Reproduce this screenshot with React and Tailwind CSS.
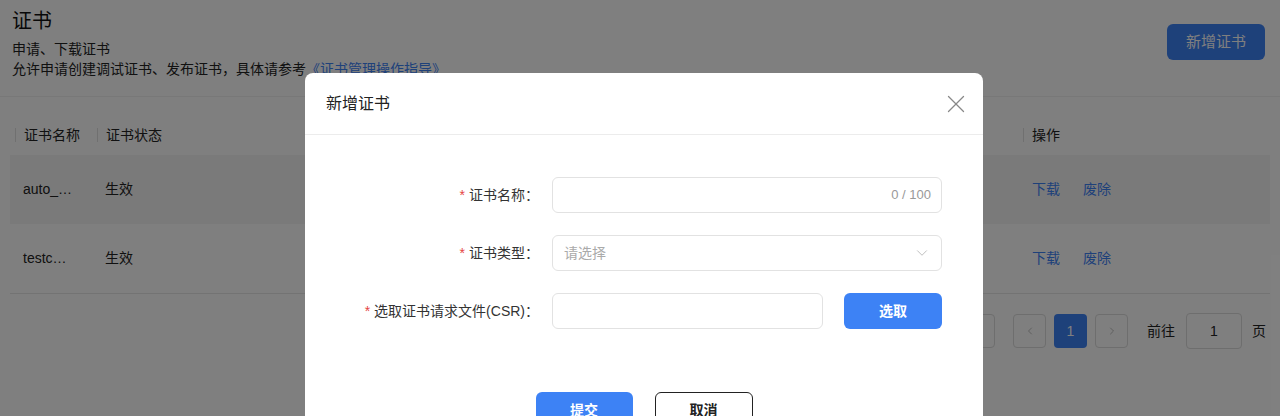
import { X, ChevronDown, ChevronLeft, ChevronRight } from "lucide-react";

const rows = [
  { name: "auto_…", status: "生效", hover: true },
  { name: "testc…", status: "生效", hover: false },
];

function Field({ label, children }) {
  return (
    <div className="flex items-center">
      <div className="w-[234px] text-right text-[14px] text-[#333]">
        <span className="text-[#e54545] mr-1">*</span>
        {label}
      </div>
      <div className="ml-[13px] flex items-center">{children}</div>
    </div>
  );
}

export default function App() {
  return (
    <div
      className="relative w-[1280px] h-[416px] overflow-hidden bg-white text-[#222]"
      style={{ fontFamily: '"Liberation Sans", "Noto Sans CJK SC", sans-serif' }}
    >
      {/* page header */}
      <div className="flex justify-between px-3 pt-2 h-[97px] border-b border-[#f0f0f0]">
        <div>
          <h1 className="text-[20px] leading-[26px] text-[#111]">证书</h1>
          <p className="mt-[5px] text-[14px] leading-[20px]">申请、下载证书</p>
          <p className="text-[14px] leading-[20px]">
            允许申请创建调试证书、发布证书，具体请参考
            <span className="text-[#3d82f5]">《证书管理操作指导》</span>
          </p>
        </div>
        <button className="mt-[16px] mr-[3px] h-[36px] w-[98px] rounded-md bg-[#3d82f5] text-white text-[15px]">
          新增证书
        </button>
      </div>

      {/* table */}
      <div className="mx-[10px] mt-[18px] border-b border-[#e6e6e6]">
        <div className="flex h-[40px] items-center text-[14px]">
          <div className="w-[87px] flex items-center">
            <span className="h-[14px] w-px bg-[#e0e0e0] mr-2 ml-[5px]" />
            证书名称
          </div>
          <div className="flex-1 flex items-center">
            <span className="h-[14px] w-px bg-[#e0e0e0] mr-2" />
            证书状态
          </div>
          <div className="w-[247px] flex items-center">
            <span className="h-[14px] w-px bg-[#e0e0e0] mr-2" />
            操作
          </div>
        </div>
        {rows.map((r) => (
          <div
            key={r.name}
            className={`flex h-[69px] items-center text-[14px] ${r.hover ? "bg-[#f4f4f4]" : ""}`}
          >
            <div className="w-[82px] pl-[13px]">{r.name}</div>
            <div className="flex-1 pl-[13px]">{r.status}</div>
            <div className="w-[247px] pl-[9px] flex gap-[23px] text-[#3d82f5]">
              <span>下载</span>
              <span>废除</span>
            </div>
          </div>
        ))}
      </div>

      {/* pagination */}
      <div className="flex justify-end items-center mt-[19px] pr-[14px] text-[14px]">
        <div className="h-[34px] w-[60px] border border-[#dcdcdc] rounded mr-[18px]" />
        <div className="h-[34px] w-[33px] border border-[#dcdcdc] rounded flex items-center justify-center text-[#aaa]">
          <ChevronLeft size={12} strokeWidth={1.5} />
        </div>
        <div className="ml-[8px] h-[34px] w-[33px] rounded bg-[#3d82f5] text-white flex items-center justify-center">
          1
        </div>
        <div className="ml-[8px] h-[34px] w-[33px] border border-[#dcdcdc] rounded flex items-center justify-center text-[#aaa]">
          <ChevronRight size={12} strokeWidth={1.5} />
        </div>
        <span className="ml-[19px]">前往</span>
        <div className="ml-[11px] h-[36px] w-[56px] border border-[#dcdcdc] rounded flex items-center justify-center">
          1
        </div>
        <span className="ml-[10px]">页</span>
      </div>

      {/* mask */}
      <div className="absolute inset-0 bg-black/50" />

      {/* dialog */}
      <div className="absolute left-[305px] top-[73px] w-[678px] h-[400px] bg-white rounded-lg">
        <div className="h-[62px] flex items-center justify-between pl-[21px] pr-[12px] border-b border-[#ececec]">
          <span className="text-[16px] text-[#222]">新增证书</span>
          <X size={30} strokeWidth={1} className="text-[#888]" />
        </div>
        <div className="pt-[42px] flex flex-col gap-[22px]">
          <Field label="证书名称：">
            <div className="w-[390px] h-[36px] border border-[#e2e2e2] rounded-md flex items-center justify-end pr-[10px] text-[13px] text-[#999]">
              0 / 100
            </div>
          </Field>
          <Field label="证书类型：">
            <div className="w-[390px] h-[36px] border border-[#e2e2e2] rounded-md flex items-center justify-between pl-[11px] pr-[10px] text-[14px] text-[#aaa]">
              <span>请选择</span>
              <ChevronDown size={18} strokeWidth={1} className="text-[#aaa]" />
            </div>
          </Field>
          <Field label="选取证书请求文件(CSR)：">
            <div className="w-[271px] h-[36px] border border-[#e2e2e2] rounded-md" />
            <button className="ml-[21px] w-[98px] h-[36px] rounded-md bg-[#3d82f5] text-white text-[14px] font-bold">
              选取
            </button>
          </Field>
        </div>
        <div className="mt-[63px] flex justify-center gap-[22px]">
          <button className="w-[97px] h-[36px] rounded-md bg-[#3d82f5] text-white text-[14px] font-bold">
            提交
          </button>
          <button className="w-[98px] h-[36px] rounded-md border border-[#222] bg-white text-[#222] text-[14px] font-bold">
            取消
          </button>
        </div>
      </div>
    </div>
  );
}
